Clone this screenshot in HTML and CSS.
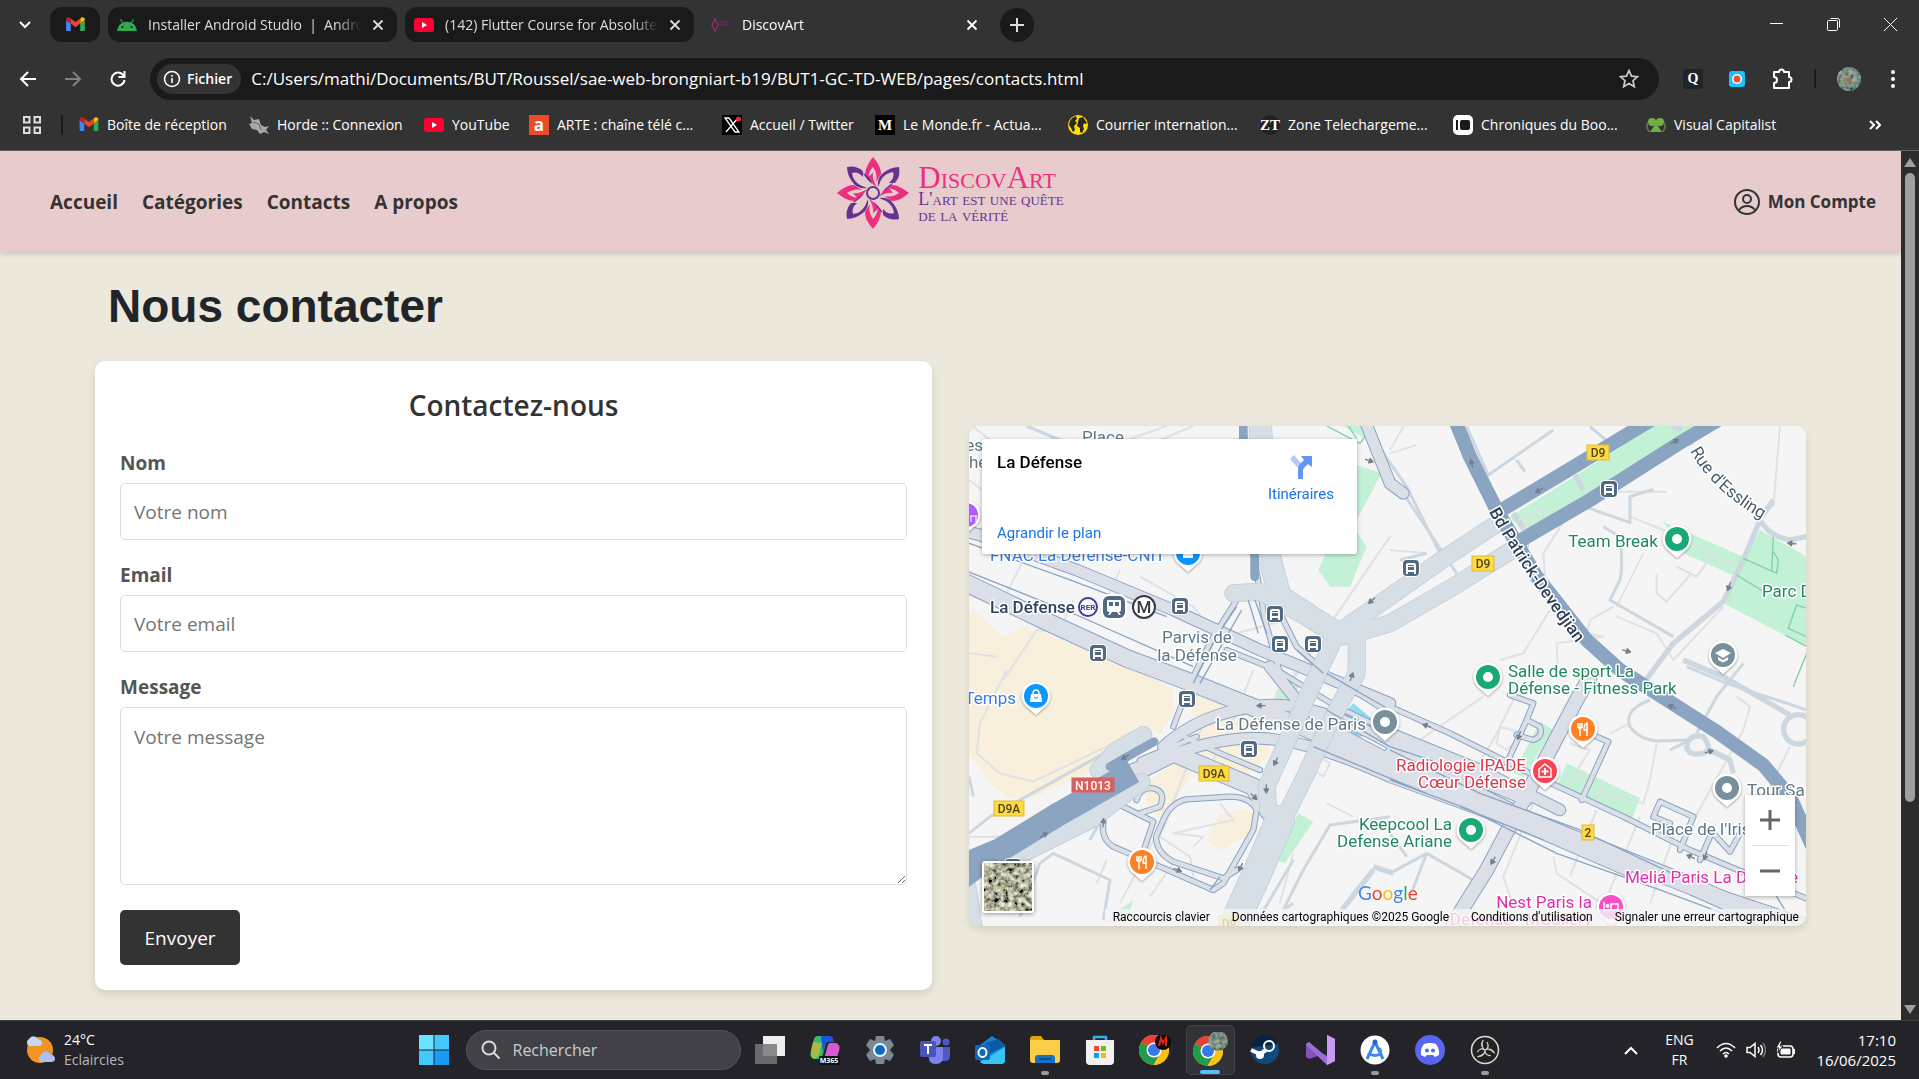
FILE: index.html
```html
<!DOCTYPE html>
<html lang="fr">
<head>
<meta charset="utf-8">
<meta name="viewport" content="width=device-width, initial-scale=1">
<title>DiscovArt</title>
<link rel="stylesheet" href="styles.css">
</head>
<body>
<svg class="defs" aria-hidden="true">
  <defs>
    <symbol id="gmail" viewBox="0 0 20 16">
      <path fill="#4285f4" d="M1 15h4V7L0 3.500V14q0 1 1 1z"/>
      <path fill="#34a853" d="M15 15h4q1 0 1-1V3.500L15 7z"/>
      <path fill="#fbbc04" d="M15 1.500V7l5-3.700V2.500C20 .5 17.500-.4 16 .7z"/>
      <path fill="#ea4335" d="M5 7V1.500l5 3.700 5-3.700V7l-5 3.800z"/>
      <path fill="#c5221f" d="M0 2.500v.8L5 7V1.500L4 .7C2.500-.4 0 .5 0 2.500z"/>
    </symbol>
    <symbol id="youtube" viewBox="0 0 20 14">
      <rect width="20" height="14" rx="3" fill="#ff0033"/><path d="M8 4v6l5-3z" fill="#fff"/>
    </symbol>
    <symbol id="close" viewBox="0 0 12 12"><path d="M1.500 1.500l9 9m0-9l-9 9" stroke="currentColor" stroke-width="1.800" fill="none"/></symbol>
    <symbol id="chrome" viewBox="0 0 30 30">
      <circle cx="15" cy="15" r="15" fill="#fbc116"/>
      <path d="M15 15L2 7.500A15 15 0 0 1 28 7.500H15z" fill="#ea4335"/>
      <path d="M15 15L2 7.500A15 15 0 0 0 14.500 30L21 19z" fill="#229c4c"/>
      <path d="M15 8H28.300A15 15 0 0 1 14.500 30L21.500 18z" fill="#fbc116"/>
      <circle cx="15" cy="15" r="7.500" fill="#fff"/><circle cx="15" cy="15" r="6" fill="#3b78e7"/>
    </symbol>
    <filter id="foliage" x="0" y="0" width="1" height="1">
      <feTurbulence type="fractalNoise" baseFrequency="0.200" numOctaves="4" seed="8"/>
      <feColorMatrix values="1.600 .3 0 0 -.52  1.500 .35 0 0 -.5  1.200 .2 .2 0 -.48  0 0 0 0 1"/>
      <feComposite in2="SourceGraphic" operator="in"/>
    </filter>
    <filter id="dusk" x="0" y="0" width="1" height="1">
      <feTurbulence type="fractalNoise" baseFrequency="0.250" numOctaves="2" seed="3"/>
      <feColorMatrix values=".6 0 0 0 -.1  .6 0 0 0 -.03  .3 0 .3 0 -.08  0 0 0 0 1"/>
      <feComposite in2="SourceGraphic" operator="in"/>
    </filter>
    <symbol id="flower" viewBox="-36 -36 72 72">
      <g id="quad">
        <path fill="#ec2f7f" d="M0-36C5-30 8-25 8-19L3-11Q5-19 0-26Q-5-21-5-13L-8-20C-7-26-4-31 0-36zM-5-16Q-3-10 4-6Q-1-13 0-20z"/>
        <path fill="#65338f" d="M26-26Q28-17 22-10L16-10Q22-15 20-21Q12-20 8-13L5-6Q4-15 9-19Q17-26 26-26zM24-12Q16-9 9-1Q17-3 20-10z"/>
      </g>
      <use href="#quad" transform="rotate(90)"/><use href="#quad" transform="rotate(180)"/><use href="#quad" transform="rotate(270)"/>
      <circle r="6" fill="none" stroke="#65338f" stroke-width="2"/>
    </symbol>
  </defs>
</svg>

<div class="browser">
  <div class="tabs">
    <button class="tab-search" aria-label="Rechercher dans les onglets"><svg width="12" height="8" viewBox="0 0 12 8"><path d="M1 1l5 5 5-5" fill="none" stroke="#fff" stroke-width="2"/></svg></button>
    <div class="tab pinned"><svg width="19" height="15"><use href="#gmail"/></svg></div>
    <div class="tab">
      <svg width="20" height="12" viewBox="0 0 20 12"><path d="M0 12Q1 6 5 4L3 .5 4 0l2 3.500q4-1.500 8 0L16 0l1 .5L15 4q4 2 5 8z" fill="#32a852"/><circle cx="5.500" cy="8" r="1" fill="#1a1a1a"/><circle cx="14.500" cy="8" r="1" fill="#1a1a1a"/></svg>
      <span class="tab-title">Installer Android Studio &nbsp;|&nbsp; Android</span>
      <button aria-label="Fermer"><svg width="12" height="12"><use href="#close"/></svg></button>
    </div>
    <div class="tab">
      <svg width="20" height="14"><use href="#youtube"/></svg>
      <span class="tab-title">(142) Flutter Course for Absolute</span>
      <button aria-label="Fermer"><svg width="12" height="12"><use href="#close"/></svg></button>
    </div>
    <div class="tab active">
      <svg width="20" height="20" viewBox="0 0 20 20"><path d="M4 4l3 6-3 6-3-6z" fill="none" stroke="#8d2c68" stroke-width="1.500"/><path d="M8 7h10M8 10h8" stroke="#6b2854" stroke-width="1.500"/></svg>
      <span class="tab-title">DiscovArt</span>
      <button aria-label="Fermer"><svg width="12" height="12"><use href="#close"/></svg></button>
    </div>
    <button class="new-tab" aria-label="Nouvel onglet"><svg width="14" height="14" viewBox="0 0 14 14"><path d="M7 0v14M0 7h14" stroke="#ddd" stroke-width="2"/></svg></button>
    <div class="window-controls">
      <button aria-label="Réduire"><svg width="13" height="13" viewBox="0 0 13 13"><path d="M0 5.500h13" stroke="#fff"/></svg></button>
      <button aria-label="Restaurer"><svg width="13" height="13" viewBox="0 0 13 13" fill="none" stroke="#fff"><rect x=".5" y="2.500" width="10" height="10" rx="1"/><path d="M3.500.5h7q2 0 2 2v7"/></svg></button>
      <button aria-label="Fermer la fenêtre"><svg width="13" height="13" viewBox="0 0 13 13"><path d="M0 0l13 13M13 0L0 13" stroke="#fff"/></svg></button>
    </div>
  </div>

  <div class="toolbar">
    <button class="nav-button" aria-label="Précédent"><svg width="18" height="16" viewBox="0 0 18 16"><path d="M17 8H2m7-7L2 8l7 7" fill="none" stroke="#fff" stroke-width="2"/></svg></button>
    <button class="nav-button" aria-label="Suivant"><svg width="18" height="16" viewBox="0 0 18 16"><path d="M1 8h15M9 1l7 7-7 7" fill="none" stroke="#808080" stroke-width="2"/></svg></button>
    <button class="nav-button" aria-label="Actualiser"><svg width="16" height="16" viewBox="0 0 16 16"><path d="M14 5.500A6.500 6.500 0 1 0 14.500 9" fill="none" stroke="#fff" stroke-width="2"/><path d="M15.500 0v7h-7V5h5V0z" fill="#fff"/></svg></button>
    <div class="address">
      <button class="chip"><svg width="18" height="18" viewBox="0 0 18 18"><circle cx="9" cy="9" r="7.500" fill="none" stroke="#fff" stroke-width="1.600"/><path d="M9 8v5M9 5v1.700" stroke="#fff" stroke-width="1.600"/></svg>Fichier</button>
      <input class="url" aria-label="Adresse" value="C:/Users/mathi/Documents/BUT/Roussel/sae-web-brongniart-b19/BUT1-GC-TD-WEB/pages/contacts.html">
      <button aria-label="Ajouter aux favoris"><svg width="20" height="19" viewBox="0 0 20 19"><path d="M10 1.500l2.500 5.600 6 .6-4.500 4 1.300 6L10 14.600l-5.300 3.100 1.300-6-4.500-4 6-.6z" fill="none" stroke="#ccc" stroke-width="1.700"/></svg></button>
    </div>
    <div class="extensions">
      <button class="ext-q" aria-label="Extension Q">Q</button>
      <button aria-label="Enregistreur"><svg width="16" height="16" viewBox="0 0 16 16"><rect width="16" height="16" rx="3" fill="#1cc2fb"/><circle cx="8" cy="8" r="5" fill="#fff"/><circle cx="8" cy="8" r="3.500" fill="#f24b33"/></svg></button>
      <button aria-label="Extensions"><svg width="22" height="22" viewBox="0 0 22 22"><path d="M3 4h5q0-2.500 2.500-2.500T13 4h5v5q2.500 0 2.500 2.500T18 14v6H3v-5q3 0 3-3T3 9z" fill="none" stroke="#fff" stroke-width="2" stroke-linejoin="round"/></svg></button>
      <span class="divider"></span>
      <button aria-label="Profil"><svg width="24" height="24"><circle cx="12" cy="12" r="12" filter="url(#dusk)"/><circle cx="12" cy="13" r="3" fill="#b0683f" opacity=".7"/></svg></button>
      <button class="menu" aria-label="Menu"><svg width="4" height="18" viewBox="0 0 4 18" fill="#fff"><circle cx="2" cy="2" r="2"/><circle cx="2" cy="9" r="2"/><circle cx="2" cy="16" r="2"/></svg></button>
    </div>
  </div>

  <nav class="bookmarks" aria-label="Favoris">
    <button aria-label="Groupes d'onglets"><svg width="18" height="18" viewBox="0 0 18 18" fill="none" stroke="#ddd" stroke-width="2"><path d="M1 1h5.500v5.500H1zM11.500 1H17v5.500h-5.500zM1 11.500h5.500V17H1zM11.500 11.500H17V17h-5.500z"/></svg></button>
    <span class="divider"></span>
    <a href="#"><svg width="20" height="15"><use href="#gmail"/></svg>Boîte de réception</a>
    <a href="#"><svg width="20" height="20" viewBox="0 0 20 20"><path d="M1 1l4 4 5-1 2 6 4 2 4-1-3 4 3 4-5-2-4 2-3-4-5-1-3-5 3-1z" fill="#a8a8a8"/><path d="M4 7l6 2 2 6" stroke="#666" fill="none"/></svg>Horde :: Connexion</a>
    <a href="#"><svg width="20" height="14"><use href="#youtube"/></svg>YouTube</a>
    <a href="#"><span class="fav arte">a</span>ARTE : chaîne télé c...</a>
    <a href="#"><svg width="20" height="20" viewBox="0 0 20 20"><rect width="20" height="20" fill="#000"/><path d="M3 3h4l10 14h-4zM16 3L4 17" fill="none" stroke="#fff" stroke-width="1.300"/><circle cx="16.500" cy="4" r="2.500" fill="#f4212e"/></svg>Accueil / Twitter</a>
    <a href="#"><span class="fav monde">M</span>Le Monde.fr - Actua...</a>
    <a href="#"><svg width="20" height="20" viewBox="0 0 20 20"><circle cx="10" cy="10" r="10" fill="#ffdf00"/><path d="M2 6Q4 2 8 1l1 3-2 2 2 2-3 3 1 4-2 2-2-4-2-3zM11 3l4-1 4 6-2 1-1-1-1 3 1 3-2 4-2-1v-4l-3-2 1-4z" fill="#292920"/></svg>Courrier internation...</a>
    <a href="#"><span class="fav zone">ZT</span>Zone Telechargeme...</a>
    <a href="#"><svg width="20" height="20" viewBox="0 0 20 20"><rect width="20" height="20" rx="5" fill="#fff"/><path d="M4 5v10" stroke="#1a1a1a" stroke-width="2"/><rect x="7" y="5" width="10" height="10" rx="2" fill="#1a1a1a"/></svg>Chroniques du Boo...</a>
    <a href="#"><svg width="20" height="16" viewBox="0 0 20 16"><circle cx="6" cy="5" r="4" fill="#73ae43"/><circle cx="14" cy="5" r="4" fill="#73ae43"/><path d="M10 6l6 9H4z" fill="#73ae43"/><path d="M4 15Q-1 11 2 5M16 15q5-4 2-10" fill="none" stroke="#557f37" stroke-width="1.500"/></svg>Visual Capitalist</a>
    <button class="more" aria-label="Autres favoris"><svg width="12" height="10" viewBox="0 0 12 10"><path d="M1 1l4 4-4 4M7 1l4 4-4 4" fill="none" stroke="#fff" stroke-width="2"/></svg></button>
  </nav>
</div>

<div class="viewport">
  <div class="page">
    <header class="site-header">
      <nav class="site-nav" aria-label="Navigation principale">
        <a href="#">Accueil</a><a href="#">Catégories</a><a href="#">Contacts</a><a href="#">A propos</a>
      </nav>
      <a class="logo" href="#">
        <svg width="72" height="72"><use href="#flower"/></svg>
        <span class="logo-text"><b>DiscovArt</b><span>L'art est une quête</span><span>de la vérité</span></span>
      </a>
      <a class="account" href="#"><svg width="26" height="26" viewBox="0 0 26 26" fill="none" stroke="#333" stroke-width="2"><circle cx="13" cy="13" r="12"/><circle cx="13" cy="10" r="4"/><path d="M5 21q3-4 8-4t8 4"/></svg>Mon Compte</a>
    </header>
    <main>
      <h1>Nous contacter</h1>
      <div class="columns">
        <form class="contact-card">
          <h2>Contactez-nous</h2>
          <label for="nom">Nom</label>
          <input id="nom" type="text" placeholder="Votre nom">
          <label for="email">Email</label>
          <input id="email" type="email" placeholder="Votre email">
          <label for="message">Message</label>
          <textarea id="message" placeholder="Votre message"></textarea>
          <button type="button" class="send">Envoyer</button>
        </form>

        <section class="map" aria-label="Plan de La Défense">
          <svg class="map-canvas" viewBox="0 0 837 500" preserveAspectRatio="xMidYMid slice">
            <defs>
              <g id="streets">
                <!-- north-west rail corridor -->
                <g transform="translate(-27 -18)">
                  <path class="w2" d="M0 330L60 345L350 450L640 570L900 690L1290 850"/>
                  <path class="w4" d="M0 480L250 600L500 715L700 790L900 870L1100 950L1400 1075L1800 1240L2200 1400L2560 1560"/>
                  <path class="w1" d="M850 10L880 400L915 600L960 760L1010 860"/>
                  <path class="w1" d="M950 560L1010 680L1100 760L1290 880M830 540L760 650L690 790L640 920"/>
                  <path class="w2" d="M1210 -10L1290 190L1330 220"/>
                  <path class="w1" d="M800 690L950 750L1130 860L1320 950"/>
                </g>
                <!-- south-west interchange -->
                <g transform="translate(-27 732)">
                  <path class="w2" d="M610 230Q720 130 900 107Q1060 90 1290 220L1700 390"/>
                  <path class="w2" d="M600 270Q760 200 900 205Q1050 210 1290 320L1700 470L2000 600"/>
                  <path class="w4" d="M400 360L560 290L640 250L760 300L880 350L930 430"/>
                  <path class="w2" d="M930 -10L1010 90L1120 180L1290 270"/>
                  <path class="w1" d="M650 190L780 250L900 300M710 200L540 270"/>
                  <path class="w1" d="M470 400L580 455L555 530M530 390Q540 350 580 355Q620 365 600 410L540 430"/>
                  <path class="w1" d="M440 415Q410 500 460 530L600 590L760 660L790 640L880 480L890 420Q870 380 810 380L680 388Q630 400 610 450L588 500Q590 550 640 575L790 625L830 600"/>
                  <path class="w2" d="M1290 190L1560 300L1800 420M1290 250L1540 360L1840 510L2170 640L2560 770"/>
                </g>
                <!-- south-east side streets -->
                <g transform="translate(1263 732)">
                  <path class="w1" d="M0 110L180 190L440 320L700 440L900 540L1260 690"/>
                  <path class="w3" d="M600 20L560 90L470 260L380 430L290 600L190 760"/>
                  <path class="w1" d="M360 75L430 100L410 150L450 170Q460 200 430 210L380 195M410 150L350 280M620 200L655 215L575 390"/>
                  <path class="w1" d="M870 540L910 440L810 395L790 440L840 460M970 490L1020 545L1050 490M960 500L930 570"/>
                </g>
              </g>
              <g id="avenues">
                <g transform="translate(-27 -18)">
                  <path class="w5" d="M900 -10L910 200L925 400L960 530L1130 640"/>
                  <path class="w4" d="M820 520L900 515L1130 640L1290 530L1460 410L1620 305"/>
                  <path class="w4" d="M1150 650L1290 610L1480 500L1680 375"/>
                  <path class="w4" d="M1130 640L1060 790L960 1010L920 1100L925 1170L960 1190"/>
                  <path class="w4" d="M1190 640L1190 760L1130 870L1080 970L1040 1060L980 1180"/>
                  <path class="w6" d="M960 1200L900 1340L810 1540"/>
                </g>
                <g transform="translate(-27 732)">
                  <path class="w4" d="M150 570L400 445L545 335M415 300L470 240L550 195"/>
                  <path class="w3" d="M20 600L50 800"/>
                </g>
              </g>
            </defs>
            <rect width="837" height="500" fill="#f5f5f5"/>
            <g transform="scale(.33333)">
              <g fill="#f8efdc">
                <path transform="translate(-27 732)" d="M27 -180L60 -165L130 -100L190 -130L460 -40L640 60V130L600 190L560 180L470 230L400 300L220 385H150L100 350L60 290L27 260zM640 200L900 110L930 250L850 330L700 300L640 400L620 470L560 400V340L640 280zM740 510L780 430L850 420L885 430L860 500L780 540zM690 80L760 60L830 110L700 150z"/>
              </g>
              <g fill="#c3f1d5">
                <path transform="translate(-27 -18)" d="M1150 18H1245L1225 60zM1190 135L1265 160L1190 300zM1190 335L1220 380L1170 500L1110 500L1075 450L1110 370z"/>
                <path transform="translate(1263 -18)" d="M360 290L560 165L790 18H930L870 50L600 220L400 340zM820 305L1060 410L1110 330L1250 410V680L1000 550L1040 470L880 400z"/>
                <path transform="translate(-27 732)" d="M1015 430L1060 455L975 580L950 570zM950 60L1020 40L980 140L935 130zM430 755L520 690L500 755z"/>
                <path transform="translate(1263 732)" d="M450 155L490 180L400 320L370 310zM530 280L750 385L720 460L500 350z"/>
              </g>
              <path transform="translate(-27 732)" d="M1180 100L1240 150L1190 220L1120 170z" fill="#8fdcf2"/>
              <g class="lane thin">
                <path transform="translate(-27 -18)" d="M27 180L120 250M40 20L200 150M500 60L620 18M600 60L700 18M200 400L120 560M480 450L420 580M540 470L700 560L740 610M340 540L290 650M130 780L230 630L420 650M30 700L110 710M1290 350L1050 700L990 780M830 640L980 600"/>
                <path transform="translate(1263 -18)" d="M0 100L80 75M0 90L40 20M0 390L110 400M530 290L460 400L465 470M680 215L830 215M720 290L820 330L1040 440M760 400L680 560M860 440L910 465M970 400L920 470L900 460M800 460V520L830 545L900 465M480 570L400 700L330 720M670 560L600 600L590 640L640 650L500 670L505 760M680 590L800 640L850 720L1000 560M1170 20L1150 260"/>
                <path transform="translate(-27 732)" d="M140 0L60 160L50 250L120 310L220 335L460 220M880 0L820 150L760 270M1020 0L880 180M730 160L600 500M640 400L480 700M890 430L1000 500M1000 550L960 700M440 570L410 640M640 580L570 680M600 500L690 560L700 620M780 400L820 450L640 490L730 500L700 530M27 500H130M1100 400L1180 440M1080 260L1110 280L1090 320L1060 300"/>
                <path transform="translate(1263 732)" d="M280 80L60 230L0 320M370 90L310 210L240 320M330 170L400 190L350 240L320 220zM430 400L340 620L380 740M530 350L600 240L540 220M620 370L760 400L780 330L800 220M720 160L660 190M1040 80L1080 110L1060 180L900 470M750 440L640 710M850 500L780 700M490 560L500 610L680 730M1200 230L1130 370M620 420L540 620M580 300V360M640 330L620 400"/>
              </g>
              <g class="lane">
                <path transform="translate(-27 -18)" d="M200 18L300 60M1270 100L1340 200L1440 400"/>
                <path transform="translate(1263 -18)" d="M230 20L295 165L490 30M380 120L405 155M0 160L140 370L200 460M600 20L660 70M590 262L720 308V230L790 208M640 320L690 350Q700 440 690 480L660 540L850 650M30 420L110 400M890 740L1010 790L1250 870"/>
                <path transform="translate(-27 732)" d="M27 490L90 440L450 240M40 380L27 320M180 740L240 580L280 550L450 630L430 750M440 420L390 510M1290 440L1110 465L1030 600L970 720L1000 700M1000 570L900 740"/>
                <path transform="translate(1263 732)" d="M0 610L110 550L250 630M110 550L60 680M0 490L50 560M780 90Q700 120 720 170Q750 210 800 213L890 210M840 240L890 215M920 190L980 80L1060 -20"/>
              </g>
              <g class="lane wide">
                <path transform="translate(1263 -18)" d="M1110 300Q1140 350 1200 360L1290 340M1110 300L1060 420L1000 545L850 670L760 790M1150 240L1115 290M890 50L905 75"/>
                <g transform="translate(1263 732)"><path d="M880 -30L1000 20L1200 135M890 225Q900 190 940 200Q970 240 940 250Q890 260 890 225M960 240L1020 270L1030 310"/><circle cx="1225" cy="178" r="44"/></g>
                <path transform="translate(-27 732)" d="M1240 600L1130 740M1240 590L1300 610"/>
              </g>
              <g class="line-green">
                <path transform="translate(1263 -18)" d="M1150 350L1145 455M1060 415L1160 460L1165 420L1150 395M1040 465L1130 520M1250 565L1220 555L1195 625L1250 650M1185 645L1250 680M1290 600L1210 800"/>
                <path transform="translate(-27 -18)" d="M1100 18L1200 70L1230 30M1160 10L1190 55"/>
              </g>
              <use href="#streets" class="edge"/>
              <use href="#streets" class="street"/>
              <use href="#avenues" class="avenue-edge"/>
              <use href="#avenues" class="avenue"/>
              <path transform="translate(-27 -18)" class="rail" d="M0 445L350 585L700 740M0 360L330 480L620 590M865 540L895 640M885 540L920 640M1010 690L1090 760M830 560L770 650L700 790M845 570L720 790"/>
              <path transform="translate(-27 732)" class="rail" d="M1290 240L1560 370L1860 480L2200 640M1290 330L1530 420L1790 550L2100 660L2530 820M1500 410L1750 510M1100 120L1290 230L1500 300M1060 230L1400 370M1100 10L1290 120M780 620L750 660M2400 600L2500 760"/>
              <g class="motorway">
                <path transform="translate(1263 -18)" d="M195 0L240 110L320 270L440 470L590 660L690 750L800 820L980 935L1120 1035L1200 1130L1290 1330"/>
                <path transform="translate(1263 -18)" d="M335 270L560 135L800 -10M385 365L600 240L880 62L1010 -15"/>
                <path transform="translate(-27 -18)" d="M850 0V60M884 400V470" class="narrow"/>
                <path transform="translate(-27 732)" d="M0 590L120 540L300 430L520 305" class="broad"/>
                <path transform="translate(-27 732)" d="M450 290L520 250L582 215M20 640L60 610" class="narrow"/>
              </g>
              <path transform="translate(1263 -18)" d="M555 165L580 210M840 10L875 30M370 280L405 330" class="lane wide"/>
              <path transform="translate(1263 -18)" d="M400 325L470 280Q475 260 455 262L385 300" class="lane thin"/>
              <g class="arrows">
                <g transform="translate(1263 -18)"><path d="M-14 0H6M0 -7L12 0L0 7z" transform="translate(245 130) rotate(-105)"/><path d="M-14 0H6M0 -7L12 0L0 7z" transform="translate(447 212) rotate(150)"/><path d="M-14 0H6M0 -7L12 0L0 7z" transform="translate(855 64) rotate(-30)"/><path d="M-14 0H6M0 -7L12 0L0 7z" transform="translate(1017 500) rotate(110)"/><path d="M-14 0H6M0 -7L12 0L0 7z" transform="translate(1205 370) rotate(185)"/><path d="M-14 0H6M0 -7L12 0L0 7z" transform="translate(710 693) rotate(15)"/></g>
                <g transform="translate(-27 -18)"><path d="M-14 0H6M0 -7L12 0L0 7z" transform="translate(1228 122) rotate(20)"/><path d="M-14 0H6M0 -7L12 0L0 7z" transform="translate(1235 542) rotate(140)"/><path d="M-14 0H6M0 -7L12 0L0 7z" transform="translate(1175 770) rotate(-70)"/></g>
                <g transform="translate(-27 732)"><path d="M-14 0H6M0 -7L12 0L0 7z" transform="translate(903 107) rotate(180)"/><path d="M-14 0H6M0 -7L12 0L0 7z" transform="translate(947 275) rotate(115)"/><path d="M-14 0H6M0 -7L12 0L0 7z" transform="translate(919 357) rotate(90)"/><path d="M-14 0H6M0 -7L12 0L0 7z" transform="translate(882 380) rotate(45)"/><path d="M-14 0H6M0 -7L12 0L0 7z" transform="translate(842 592) rotate(115)"/><path d="M-14 0H6M0 -7L12 0L0 7z" transform="translate(653 600) rotate(20)"/><path d="M-14 0H6M0 -7L12 0L0 7z" transform="translate(495 262) rotate(145)"/><path d="M-14 0H6M0 -7L12 0L0 7z" transform="translate(252 495) rotate(-30)"/><path d="M-14 0H6M0 -7L12 0L0 7z" transform="translate(430 458) rotate(-85)"/></g>
                <g transform="translate(1263 732)"><path d="M-14 0H6M0 -7L12 0L0 7z" transform="translate(110 167) rotate(200)"/><path d="M-14 0H6M0 -7L12 0L0 7z" transform="translate(387 197) rotate(110)"/><path d="M-14 0H6M0 -7L12 0L0 7z" transform="translate(846 110) rotate(205)"/><path d="M-14 0H6M0 -7L12 0L0 7z" transform="translate(958 245) rotate(-15)"/><path d="M-14 0H6M0 -7L12 0L0 7z" transform="translate(309 572) rotate(120)"/><path d="M-14 0H6M0 -7L12 0L0 7z" transform="translate(902 560) rotate(205)"/><path d="M-14 0H6M0 -7L12 0L0 7z" transform="translate(946 558) rotate(110)"/></g>
              </g>
            </g>

            <defs>
              <g id="bus"><rect x="-9" y="-9" width="18" height="18" rx="5" fill="#fff"/><rect x="-8" y="-8" width="16" height="16" rx="4" fill="#4f6a80"/><path d="M-5 6V-3q0-2 2-2h6q2 0 2 2v9h-2V4h-6v2z" fill="#fff"/><path d="M-3-3h6v1h-6zM-3-1h6v3h-6z" fill="#4f6a80"/></g>
              <path id="pin" d="M0 19L-8 12A14.500 14.500 0 1 1 8 12z" fill="#fff"/>
              <g id="food"><use href="#pin"/><circle r="12" fill="#ff8126"/><path d="M-5-6v5M-3-6v5M-1-6v5M-5-1h4M-3 0v7M4 7V-6q-3 1-3 7h3" stroke="#fff" stroke-width="1.500" fill="none"/></g>
              <g id="spot"><use href="#pin"/><circle r="12"/><circle r="5" fill="#fff"/></g>
              <path id="devedjian" d="M520 86Q556 150 620 234"/>
              <path id="essling" d="M721 25Q746 70 806 100"/>
            </defs>
            <use href="#bus" x="211" y="180"/><use href="#bus" x="129" y="227"/><use href="#bus" x="306" y="188"/><use href="#bus" x="311" y="218"/><use href="#bus" x="344" y="218"/><use href="#bus" x="640" y="63"/><use href="#bus" x="442" y="142"/><use href="#bus" x="218" y="273"/><use href="#bus" x="280" y="323"/><use href="#bus" x="44" y="441"/>
            <g class="drop">
              <use href="#spot" x="708" y="113" fill="#19a974"/><use href="#spot" x="519" y="251" fill="#19a974"/><use href="#spot" x="502" y="404" fill="#19a974"/>
              <use href="#spot" x="416" y="296" fill="#78909c"/><use href="#spot" x="758" y="362" fill="#78909c"/>
              <use href="#food" x="614" y="303"/><use href="#food" x="173" y="436"/>
              <g transform="translate(67 270)"><use href="#pin"/><circle r="12" fill="#0a96ff"/><path d="M-5-2H5L6 6H-6z" fill="#fff"/><path d="M-3-2q0-4 3-4t3 4" fill="none" stroke="#fff" stroke-width="1.500"/><path d="M-2 1q2 3 4 0" fill="none" stroke="#0a96ff"/></g>
              <g transform="translate(219 127)"><use href="#pin"/><circle r="12" fill="#0a96ff"/><path d="M-5-4H5V5H-5z" fill="#fff"/></g>
              <g transform="translate(576 345)"><use href="#pin"/><circle r="12" fill="#fa4455"/><path d="M-6 6V-2L0-7L6-2V6z" fill="none" stroke="#fff" stroke-width="1.500"/><path d="M0-3v7M-3.500 .5h7" stroke="#fff" stroke-width="2"/></g>
              <g transform="translate(754 229)"><use href="#pin"/><circle r="12" fill="#78909c"/><path d="M0-6L8-2L0 3L-8-2zM-5 2L0 5L5 2V5L0 7.500L-5 5z" fill="#fff"/></g>
              <g transform="translate(642 481)"><use href="#pin"/><circle r="12" fill="#f84fc4"/><path d="M-7-5v10M-7 3H7M7 5V-3H0V3" fill="none" stroke="#fff" stroke-width="1.500"/><circle cx="-3.500" cy="-1" r="2" fill="#fff"/></g>
              <g transform="translate(-3 89)"><use href="#pin"/><circle r="12" fill="#b15cff"/><path d="M4 1h7M5 1v6M10 1v6" stroke="#fff"/></g>
            </g>
            <g><circle cx="119" cy="181" r="9" fill="#fff" stroke="#3a3aa0" stroke-width="2"/><text x="119" y="184" class="rer">RER</text>
              <rect x="132" y="168" width="26" height="26" rx="8" fill="#fff"/><rect x="134" y="170" width="22" height="22" rx="6" fill="#4f6a80"/><path d="M139 174h12q1 0 1 1v9q0 2-2 2l2 3h-2l-2-3h-5l-2 3h-2l2-3q-3 0-3-2v-9q0-1 1-1z" fill="#fff"/><path d="M140 176h4v4h-4zM146 176h4v4h-4z" fill="#4f6a80"/>
              <circle cx="175" cy="181" r="11" fill="#fff" stroke="#333c44" stroke-width="2"/><text x="175" y="187" class="metro">M</text></g>
            <g class="labels grey"><text x="113" y="17">Place</text><text x="14" y="25" text-anchor="end">Les</text><text x="0" y="42">hé</text><text x="228" y="217" text-anchor="middle">Parvis de</text><text x="228" y="235" text-anchor="middle">la Défense</text><text x="397" y="304" text-anchor="end">La Défense de Paris</text><text x="778" y="370">Tour Saint</text><text x="682" y="409">Place de l'Iris</text></g>
            <g class="labels blue"><text x="21" y="135">FNAC La Défense-CNIT</text><text x="47" y="278" text-anchor="end">Les 4 Temps</text></g>
            <g class="labels green"><text x="689" y="121" text-anchor="end">Team Break</text><text x="793" y="171">Parc Diderot</text><text x="539" y="251">Salle de sport La</text><text x="539" y="268">Défense - Fitness Park</text><text x="483" y="404" text-anchor="end">Keepcool La</text><text x="483" y="421" text-anchor="end">Defense Ariane</text></g>
            <g class="labels red"><text x="557" y="345" text-anchor="end">Radiologie IPADE</text><text x="557" y="362" text-anchor="end">Cœur Défense</text></g>
            <g class="labels pink"><text x="656" y="457">Meliá Paris La Défense</text><text x="623" y="482" text-anchor="end">Nest Paris la</text><text x="623" y="499" text-anchor="end">Défense - MGallery</text></g>
            <g class="labels dark"><text x="21" y="187">La Défense</text><text><textPath href="#devedjian">Bd Patrick-Devedjian</textPath></text></g>
            <g class="labels road"><text><textPath href="#essling">Rue d'Essling</textPath></text></g>
            <g class="shields">
              <rect x="618" y="19" width="22" height="15"/><text x="629" y="31">D9</text>
              <rect x="503" y="130" width="22" height="15"/><text x="514" y="142">D9</text>
              <rect x="230" y="340" width="30" height="15"/><text x="245" y="352">D9A</text>
              <rect x="25" y="375" width="30" height="15"/><text x="40" y="387">D9A</text>
              <rect x="613" y="399" width="12" height="15"/><text x="619" y="411">2</text>
              <rect x="250" y="490" width="20" height="15"/><text x="260" y="502">D9</text>
              <rect x="103" y="352" width="42" height="14" class="national"/><text x="124" y="364" class="national-text">N1013</text>
            </g>
          </svg>
          <div class="place-card">
            <strong>La Défense</strong>
            <a class="directions" href="#"><svg width="24" height="26" viewBox="0 0 24 26"><path d="M1 5l4-4 8 9-4 4z" fill="#b3cbfb"/><path d="M9 25V15q0-3 2-5l4-4-3-4h11v11l-4-3-4 4q-1 1-1 3v8z" fill="#6394f8"/></svg>Itinéraires</a>
            <a href="#">Agrandir le plan</a>
          </div>
          <button class="satellite" aria-label="Vue satellite"><svg width="48" height="48"><rect width="48" height="48" filter="url(#foliage)"/></svg></button>
          <div class="zoom">
            <button aria-label="Zoom avant"><svg width="20" height="20" viewBox="0 0 20 20"><path d="M10 0v20M0 10h20" stroke="#666" stroke-width="3"/></svg></button>
            <button aria-label="Zoom arrière"><svg width="20" height="20" viewBox="0 0 20 20"><path d="M0 10h20" stroke="#666" stroke-width="3"/></svg></button>
          </div>
          <div class="google" aria-label="Google"><span class="g-blue">G</span><span class="g-red">o</span><span class="g-yellow">o</span><span class="g-blue">g</span><span class="g-green">l</span><span class="g-red">e</span></div>
          <div class="map-legal"><a href="#">Raccourcis clavier</a><span>Données cartographiques ©2025 Google</span><a href="#">Conditions d'utilisation</a><a href="#">Signaler une erreur cartographique</a></div>
        </section>
      </div>
    </main>
  </div>
  <div class="scrollbar" aria-hidden="true"><svg width="12" height="9" viewBox="0 0 12 9"><path d="M6 0l6 9H0z" fill="#9f9f9f"/></svg><span class="thumb"></span><span class="rest"></span><svg width="12" height="9" viewBox="0 0 12 9"><path d="M6 9l6-9H0z" fill="#9f9f9f"/></svg></div>
</div>

<footer class="taskbar">
  <button class="weather">
    <svg width="30" height="30" viewBox="0 0 30 30"><circle cx="15" cy="15" r="13" fill="#f29423"/><path d="M4 11a4 4 0 0 1 0-7a5 5 0 0 1 9 0q4 1 4 4t-4 3z" fill="#c4d7f7"/><path d="M16 27a4 4 0 0 1 0-7a5 5 0 0 1 9-1q5 1 5 5q0 3-4 3z" fill="#a9c4f2"/></svg>
    <span><b>24°C</b><span>Eclaircies</span></span>
  </button>
  <div class="apps">
    <button aria-label="Démarrer"><svg width="30" height="30" viewBox="0 0 30 30"><path d="M0 0h14.500v14.500H0z" fill="#6be2ff"/><path d="M15.500 0H30v14.500H15.500zM0 15.500h14.500V30H0z" fill="#43c8fd"/><path d="M15.500 15.500H30V30H15.500z" fill="#199cf5"/></svg></button>
    <label class="search"><svg width="20" height="20" viewBox="0 0 20 20"><circle cx="8" cy="8" r="6.500" fill="none" stroke="#ddd" stroke-width="2"/><path d="M12.500 12.500l6 6" stroke="#ddd" stroke-width="2"/></svg><input aria-label="Rechercher" placeholder="Rechercher"></label>
    <button aria-label="Vue des tâches"><svg width="30" height="28" viewBox="0 0 30 28"><path d="M8 0h22v20H8z" fill="#eee"/><path d="M0 8h22v20H0z" fill="#777" opacity=".85"/></svg></button>
    <button aria-label="Microsoft 365"><svg width="30" height="30" viewBox="0 0 30 30"><path d="M8 1h10l-5 18q-1 5-5 5H3q-4-2-2-8L4 4q1-3 4-3z" fill="#35ba72"/><path d="M1 15q1-5 2-8l9 1-3 12-4 4q-5-2-4-9z" fill="#f5bd27" opacity=".6"/><path d="M11 1h9q3 0 4 6h-5q-3 0-4 4l-2 6z" fill="#1659df"/><path d="M20 8h6q5 2 3 8l-3 9q-1 3-5 3h-8l4-15q1-5 3-5z" fill="#d85ad1"/><rect x="9" y="21" width="21" height="9" rx="2" fill="#111"/><text x="19" y="28" class="m365">M365</text></svg></button>
    <button aria-label="Paramètres"><svg width="30" height="30" viewBox="0 0 30 30"><path d="M11 1h8l1 5 5-2 4 6-4 5 4 5-4 6-5-2-1 5h-8l-1-5-5 2-4-6 4-5-4-5 4-6 5 2z" fill="#7b8894"/><circle cx="15" cy="15" r="7" fill="#e8f2fa"/><circle cx="15" cy="15" r="5" fill="#0a6ac2"/></svg></button>
    <button aria-label="Teams"><svg width="30" height="28" viewBox="0 0 30 28"><circle cx="16" cy="5" r="5" fill="#7b83eb"/><circle cx="26" cy="6" r="3.500" fill="#5059c9"/><path d="M20 11h10v9q0 5-5 5h-5z" fill="#5059c9"/><path d="M9 11h14v10q0 7-7 7t-7-6z" fill="#7b83eb"/><rect y="5" width="16" height="16" rx="2" fill="#4b53bc"/><path d="M4 9h8M8 9v9" stroke="#fff" stroke-width="2"/></svg></button>
    <button aria-label="Outlook"><svg width="30" height="28" viewBox="0 0 30 28"><path d="M5 9L17 0L30 9V24q0 4-4 4H9q-4 0-4-4z" fill="#1783d8"/><path d="M10 7l14-4 6 7-16 8z" fill="#0c59a4"/><path d="M5 26L30 11V24q0 4-4 4H9z" fill="#35c4f4"/><rect y="9" width="15" height="15" rx="2" fill="#0f66bd"/><ellipse cx="7.500" cy="16.500" rx="4" ry="4.500" fill="none" stroke="#fff" stroke-width="2"/></svg></button>
    <button aria-label="Explorateur" class="open"><svg width="30" height="28" viewBox="0 0 30 28"><path d="M0 3q0-3 3-3h8l3 4H0z" fill="#e2a300"/><path d="M0 4h30v20q0 3-3 3H3q-3 0-3-3z" fill="#fbce4a"/><path d="M5 27v-5q0-3 3-3h14q3 0 3 3v5z" fill="#1572c4"/><path d="M9 23h12" stroke="#0c4f8f" stroke-width="2"/></svg></button>
    <button aria-label="Microsoft Store"><svg width="30" height="30" viewBox="0 0 30 30"><path d="M9 7V2h12v5" fill="none" stroke="#2fb1ee" stroke-width="2.500"/><path d="M1 5h28v21q0 4-4 4H5q-4 0-4-4z" fill="#f1f1f1"/><path d="M9 11h5v5H9z" fill="#e94e27"/><path d="M16 11h5v5h-5z" fill="#7fba00"/><path d="M9 18h5v5H9z" fill="#00a4ef"/><path d="M16 18h5v5h-5z" fill="#ffb900"/></svg></button>
    <button aria-label="Chrome M"><svg width="32" height="30" viewBox="0 0 32 30"><use href="#chrome" width="30" height="30"/><circle cx="24" cy="7" r="8" fill="#120606"/><path d="M20 11l2-8 2 5 3-5v8" fill="none" stroke="#e2231a" stroke-width="2"/></svg></button>
    <button aria-label="Chrome" class="open current"><svg width="36" height="36" viewBox="0 0 36 36"><use href="#chrome" x="1" y="4" width="30" height="30"/><circle cx="26" cy="9" r="10" filter="url(#dusk)"/></svg></button>
    <button aria-label="Steam"><svg width="30" height="30" viewBox="0 0 30 30"><circle cx="15" cy="15" r="14" fill="#104a7d"/><path d="M1 13A14 14 0 0 1 28 9z" fill="#0a2140"/><circle cx="19" cy="11" r="5" fill="none" stroke="#fff" stroke-width="2"/><path d="M1 15l9 4 6-4" stroke="#fff" stroke-width="4" fill="none"/><circle cx="10" cy="20" r="4" fill="#fff"/></svg></button>
    <button aria-label="Visual Studio"><svg width="30" height="30" viewBox="0 0 30 30"><path d="M1 9l3-2 18 19v-8L4 24l-3-2z" fill="#8251ba"/><path d="M1 9l3-2 18 15V0l8 4v22l-8 4L1 10z" fill="#9b6dd6"/><path d="M22 8v13l-8-6z" fill="#24242c"/><path d="M22 0l8 4v22l-8 4z" fill="#c79bf0"/></svg></button>
    <button aria-label="Android Studio" class="open"><svg width="30" height="30" viewBox="0 0 30 30"><circle cx="15" cy="15" r="14.500" fill="#fff"/><path d="M15 7L7 24M15 7l8 17M8 18q7 5 14 0" fill="none" stroke="#3d86f2" stroke-width="3"/><circle cx="15" cy="7" r="2.500" fill="#2a62c4"/><path d="M18 12q5 1 4 6z" fill="#35a853"/></svg></button>
    <button aria-label="Discord"><svg width="30" height="30" viewBox="0 0 30 30"><circle cx="15" cy="15" r="15" fill="#5865f2"/><path d="M9 9q6-2 12 0q4 6 3 11l-4 2-2-2h-6l-2 2-4-2q-1-6 3-11z" fill="#fff"/><circle cx="12" cy="15.500" r="2" fill="#5865f2"/><circle cx="18" cy="15.500" r="2" fill="#5865f2"/></svg></button>
    <button aria-label="OBS" class="open"><svg width="30" height="30" viewBox="0 0 30 30"><circle cx="15" cy="15" r="13.500" fill="#222" stroke="#ddd" stroke-width="1.500"/><g id="blade"><path d="M13 5Q9 11 15 15Q20 12 17 7Q20 14 15 15Q11 13 13 5z" fill="#c8c8c8" stroke="#c8c8c8"/></g><use href="#blade" transform="rotate(120 15 15)"/><use href="#blade" transform="rotate(240 15 15)"/></svg></button>
  </div>
  <div class="tray">
    <button aria-label="Icônes masquées"><svg width="14" height="9" viewBox="0 0 14 9"><path d="M1 8l6-6 6 6" fill="none" stroke="#fff" stroke-width="2"/></svg></button>
    <button class="lang"><span>ENG</span><span>FR</span></button>
    <button class="status" aria-label="Réseau, son, batterie">
      <svg width="20" height="16" viewBox="0 0 20 16" fill="none" stroke="#fff" stroke-width="1.600"><path d="M1 6q9-9 18 0M4 9q6-6 12 0M7 12q3-3 6 0"/><circle cx="10" cy="14" r="1" fill="#fff"/></svg>
      <svg width="20" height="16" viewBox="0 0 20 16" fill="none" stroke="#fff" stroke-width="1.500"><path d="M1 5.500h3L9 1.500v13L4 10.500H1zM12 5q2 3 0 6M14.500 3q4 5 0 10"/><path d="M17 1q5 7 0 14" stroke="#777"/></svg>
      <svg width="20" height="18" viewBox="0 0 20 18"><rect x="2" y="5" width="15" height="11" rx="3" fill="none" stroke="#fff" stroke-width="1.600"/><rect x="4.500" y="7.500" width="10" height="6" rx="1" fill="#fff"/><path d="M18 8v5" stroke="#fff" stroke-width="2"/><path d="M4 0L0 7h3l-1 5 5-7H4l2-5z" fill="#fff" stroke="#232328"/></svg>
    </button>
    <button class="clock"><span>17:10</span><span>16/06/2025</span></button>
  </div>
</footer>
</body>
</html>
```
FILE: styles.css
```css
* { box-sizing: border-box; }

body {
  margin: 0;
  height: 100vh;
  display: flex;
  flex-direction: column;
  overflow: hidden;
  font-family: "Open Sans", "Noto Sans", sans-serif;
  font-size: 14px;
  color: #fff;
  background: #333;
}

button, input, textarea { font: inherit; color: inherit; }
button { border: 0; padding: 0; background: none; display: inline-flex; align-items: center; justify-content: center; }
a { color: inherit; text-decoration: none; }
svg { flex: none; display: block; }
.defs { position: absolute; width: 0; height: 0; }

/* Browser frame */
.browser { flex: none; background: #333; border-bottom: 1px solid #666; }

.tabs { display: flex; align-items: center; height: 49px; padding-left: 10px; }
.tab-search { width: 30px; height: 35px; margin-right: 10px; }
.tab {
  width: 289px;
  height: 35px;
  margin-right: 8px;
  padding: 0 13px 0 9px;
  border-radius: 12px;
  background: #1a1a1a;
  display: flex;
  align-items: center;
  gap: 11px;
  color: #ddd;
}
.tab.pinned { width: 50px; padding: 0; justify-content: center; }
.tab.active { background: none; color: #fff; margin-right: 9px; }
.tab-title {
  flex: 1;
  overflow: hidden;
  white-space: nowrap;
  -webkit-mask-image: linear-gradient(to left, transparent, #000 24px);
  mask-image: linear-gradient(to left, transparent, #000 24px);
}
.new-tab { width: 34px; height: 34px; border-radius: 50%; background: #1a1a1a; }
.window-controls { margin-left: auto; display: flex; }
.window-controls button { width: 57px; height: 48px; }

.toolbar { display: flex; align-items: center; height: 59px; padding: 0 24px 0 5px; }
.nav-button { width: 45px; height: 40px; }
.address {
  flex: 1;
  height: 42px;
  margin: 0 24px 0 10px;
  padding: 0 20px 0 7px;
  border-radius: 21px;
  background: #1a1a1a;
  display: flex;
  align-items: center;
  gap: 10px;
}
.chip { height: 30px; padding: 0 9px 0 6px; gap: 6px; border-radius: 15px; background: #333; font-weight: 600; }
.url { flex: 1; border: 0; padding: 0; background: none; font-size: 17px; outline: 0; }
.extensions { display: flex; align-items: center; gap: 26px; }
.ext-q { width: 20px; height: 20px; border-radius: 3px; background: #212329; font: bold 14px "Liberation Serif", serif; }
.divider { width: 2px; height: 19px; background: #1a1a1a; }
.extensions .divider { margin: 0 -5px; }
.menu { margin-left: 4px; }

.bookmarks {
  display: grid;
  grid-template-columns: 38px 18px 170px 175px 105px 193px 153px 193px 192px 193px 193px 1fr 88px;
  align-items: center;
  height: 33px;
  margin-bottom: 9px;
  padding-left: 23px;
}
.bookmarks > button { justify-content: flex-start; }
.bookmarks a { display: flex; align-items: center; gap: 8px; white-space: nowrap; }
.bookmarks .more { justify-content: center; }
.fav { width: 20px; height: 20px; display: grid; place-items: center; line-height: 20px; font-weight: 700; }
.arte { background: #ea4c27; font-size: 17px; }
.monde { background: #000; font-family: "Liberation Serif", serif; font-size: 15px; }
.zone { background: #222; border-radius: 50%; font-family: "Liberation Serif", serif; font-size: 15px; }

/* Web page */
.viewport { flex: 1; min-height: 0; display: flex; }
.page { flex: 1; min-width: 0; background: #ece8db; color: #212529; font-size: 19px; }

.site-header {
  display: grid;
  grid-template-columns: 1fr auto 1fr;
  align-items: center;
  height: 101px;
  padding: 0 25px;
  background: #e8cccd;
  box-shadow: 0 2px 5px rgba(0, 0, 0, .15);
  font-weight: 700;
  color: #333;
}
.site-nav { display: flex; gap: 24px; padding-left: 25px; }
.account { justify-self: end; display: flex; align-items: center; gap: 8px; font-size: 17px; }
.logo { display: flex; gap: 9px; height: 89px; }
.logo-text {
  display: flex;
  flex-direction: column;
  padding-top: 7px;
  font-family: "Liberation Serif", serif;
  font-variant: small-caps;
  font-weight: 400;
  font-size: 18px;
  line-height: 16px;
  color: #65338f;
}
.logo-text b { font-weight: 400; font-size: 31px; line-height: 27px; color: #ec2f7f; }

main { padding: 0 5%; }
h1 { margin: 0; padding: 27px 13px; font: bold 46px/55px "Liberation Sans", sans-serif; }
.columns { display: grid; grid-template-columns: 1fr 1fr; gap: 37px; align-items: center; }
.contact-card {
  height: 629px;
  padding: 25px;
  border-radius: 10px;
  background: #fff;
  box-shadow: 0 4px 8px rgba(0, 0, 0, .1);
  display: flex;
  flex-direction: column;
}
h2 { margin: 0 0 25px; text-align: center; font-size: 28px; font-weight: 600; line-height: 38px; color: #333; }
.contact-card label { font-weight: 700; line-height: 29px; margin-bottom: 5px; color: #555; }
.contact-card input, textarea { width: 100%; padding: 12px 13px; border: 1px solid #ddd; border-radius: 5px; outline: 0; background: #fff; }
.contact-card input { height: 57px; margin-bottom: 21px; }
textarea { height: 178px; margin-bottom: 25px; line-height: 35px; resize: vertical; display: block; }
.contact-card ::placeholder { color: #757575; opacity: 1; }
.send { align-self: flex-start; width: 120px; height: 55px; border-radius: 5px; background: #333; color: #fff; }

/* Map */
.map { position: relative; height: 500px; border-radius: 10px; overflow: hidden; box-shadow: 0 4px 8px rgba(0, 0, 0, .1); font-family: Roboto, sans-serif; }
.map-canvas { width: 100%; height: 100%; }
.map-canvas path { stroke-linejoin: round; }
.lane { fill: none; stroke: #ccd7e0; stroke-width: 9px; }
.lane.thin { stroke: #e0e1e5; stroke-width: 6px; }
.lane.wide { stroke-width: 16px; }
.line-green { fill: none; stroke: #7fd0b1; stroke-width: 4px; }
.w1, .w2, .w3, .w4, .w5, .w6 { fill: none; stroke-linecap: round; }
.w1 { stroke-width: calc(13px + var(--edge)); }
.w2 { stroke-width: calc(32px + var(--edge)); }
.w3 { stroke-width: calc(40px + var(--edge)); }
.w4 { stroke-width: calc(50px + var(--edge)); }
.w5 { stroke-width: calc(66px + var(--edge)); }
.w6 { stroke-width: calc(86px + var(--edge)); }
.edge { --edge: 6px; stroke: #89a3c2; }
.street { --edge: 0px; stroke: #dbe0e8; }
.avenue-edge { --edge: 4px; stroke: #bccad7; }
.avenue { --edge: 0px; stroke: #d6dfe6; }
.rail { fill: none; stroke: #89a3c2; stroke-width: 4px; }
.motorway { fill: none; stroke: #8aa4c1; stroke-width: 42px; }
.motorway .narrow { stroke-width: 26px; stroke-linecap: round; }
.motorway .broad { stroke-width: 72px; }
.arrows { fill: #74808c; stroke: #74808c; stroke-width: 4px; }
.drop { filter: drop-shadow(0 1px 1px rgba(0, 0, 0, .35)); }
.labels { font-size: 17px; paint-order: stroke; stroke: #fff; stroke-width: 3px; stroke-linejoin: round; }
.grey { fill: #5f7886; }
.blue { fill: #3b7de0; }
.green { fill: #23875f; }
.red { fill: #d6394c; }
.pink { fill: #e02fab; }
.dark { fill: #2f4257; font-weight: 500; }
.road { fill: #4a5c6c; }
.rer { font-size: 8px; font-weight: 700; fill: #3a3aa0; text-anchor: middle; }
.metro { font-size: 17px; font-weight: 500; fill: #333c44; text-anchor: middle; }
.shields { font-size: 12px; font-weight: 500; text-anchor: middle; fill: #4f4520; }
.shields rect { fill: #fddb41; stroke: #dfbb35; }
.shields .national { fill: #d9605f; stroke: #d9605f; }
.shields .national-text { fill: #fff; }

.place-card {
  position: absolute;
  left: 13px;
  top: 13px;
  width: 375px;
  height: 115px;
  padding: 12px 23px 12px 15px;
  display: grid;
  grid-template-columns: 1fr auto;
  align-content: space-between;
  border-radius: 3px;
  background: #fff;
  box-shadow: 0 1px 4px rgba(0, 0, 0, .3);
  font-size: 15px;
  line-height: 18px;
  color: #1a73e8;
}
.place-card strong { font-size: 17px; font-weight: 500; line-height: 22px; color: #000; }
.directions { display: flex; flex-direction: column; align-items: center; gap: 5px; padding-top: 3px; }
.satellite { position: absolute; left: 13px; bottom: 13px; width: 52px; height: 52px; border: 2px solid #fff; border-radius: 3px; overflow: hidden; box-shadow: 0 1px 4px rgba(0, 0, 0, .4); }
.zoom { position: absolute; right: 11px; bottom: 30px; width: 50px; background: #fff; box-shadow: 0 1px 4px rgba(0, 0, 0, .3); padding: 0 6px; }
.zoom button { width: 100%; height: 50px; }
.zoom button:first-child { border-bottom: 1px solid #e0e0e0; height: 51px; }
.google { position: absolute; left: 389px; bottom: 20px; font: 19px/26px Lato, sans-serif; text-shadow: 0 0 2px #fff; }
.g-blue { color: #4285f4; }
.g-red { color: #ea4335; }
.g-yellow { color: #fbbc04; }
.g-green { color: #34a853; }
.map-legal { position: absolute; right: 0; bottom: 0; display: flex; gap: 22px; padding: 0 7px 0 8px; background: rgba(245, 245, 245, .8); font-size: 12px; line-height: 17px; color: #000; white-space: nowrap; }

.scrollbar { width: 18px; flex: none; background: #2c2c2c; display: flex; flex-direction: column; align-items: center; gap: 6px; padding: 7px 0 6px; }
.thumb { flex: 633; width: 10px; border-radius: 5px; background: #9f9f9f; }
.rest { flex: 192; }

/* Taskbar */
.taskbar { flex: none; height: 59px; border-top: 1px solid #3d4140; background: #232329; display: grid; grid-template-columns: 1fr auto 1fr; align-items: center; font-size: 14px; line-height: 20px; }
.weather { justify-self: start; margin-left: 25px; gap: 9px; text-align: left; }
.weather > span, .lang, .clock { display: flex; flex-direction: column; }
.weather b { font-weight: 400; }
.weather span span { color: #bbb; }
.apps { display: flex; align-items: center; }
.apps > button { position: relative; width: 55px; height: 50px; }
.search { display: flex; align-items: center; gap: 12px; width: 275px; height: 40px; margin: 0 2px 0 4px; padding: 0 14px; border: 1px solid #54545a; border-radius: 20px; background: #414147; }
.search input { min-width: 0; flex: 1; border: 0; padding: 0; background: none; font-size: 16px; outline: 0; }
.search ::placeholder { color: #ccc; opacity: 1; }
.apps .current { width: 49px; margin: 0 3px; border: 1px solid #404046; border-radius: 5px; background: #323238; }
.open::after { content: ""; position: absolute; bottom: 0; width: 8px; height: 4px; border-radius: 2px; background: #9a9a9f; }
.current::after { width: 20px; background: #4cc2ff; }
.m365 { font: bold 7px "Open Sans", sans-serif; fill: #fff; text-anchor: middle; }
.tray { justify-self: end; display: flex; align-items: center; margin-right: 23px; }
.lang { width: 50px; margin-left: 16px; margin-right: 12px; }
.status { gap: 10px; }
.clock { align-items: flex-end; margin-left: 20px; font-size: 15px; }
```
